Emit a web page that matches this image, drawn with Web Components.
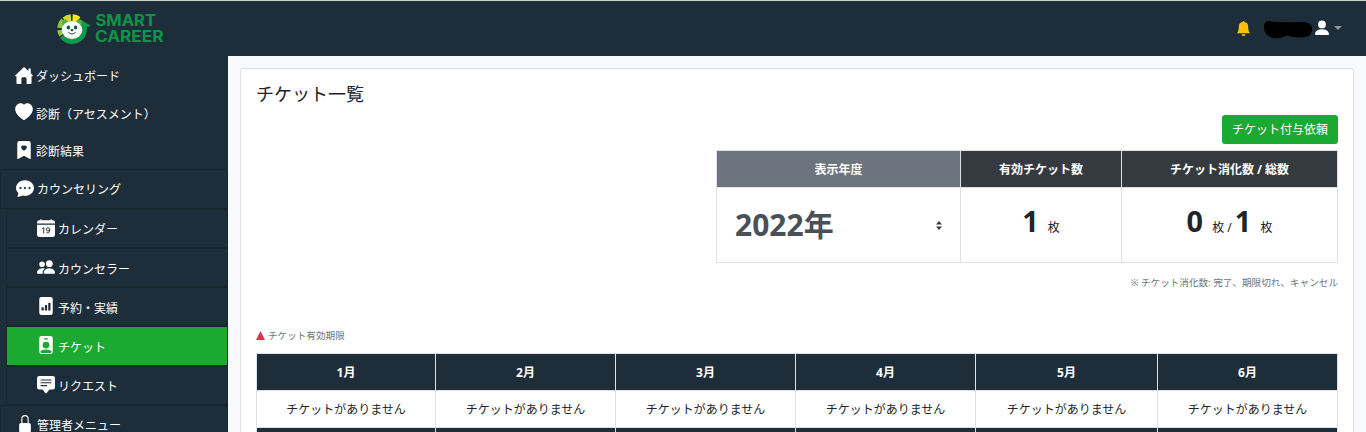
<!DOCTYPE html>
<html lang="ja">
<head>
<meta charset="utf-8">
<title>チケット一覧</title>
<style>
    body {
        margin: 0;
        height: 432px;
        overflow: hidden;
        background: #f8f9fc;
        color: #212529;
        font-family: "Noto Sans", "Noto Sans CJK JP", sans-serif;
        font-size: 12px;
        line-height: 18px;
    }
    .layout {
        display: flex;
        height: 376px;
        overflow: hidden;
    }
    .content {
        flex: 1;
        padding: 12px 12px 0;
    }
    .actions {
        display: flex;
        justify-content: flex-end;
        margin-bottom: 6px;
    }
</style>
</head>
<body>
<app-header></app-header>
<div class="layout">
    <side-menu>
        <menu-item icon="house">ダッシュボード</menu-item>
        <menu-item icon="heart">診断（アセスメント）</menu-item>
        <menu-item icon="bookmark">診断結果</menu-item>
        <menu-item icon="chat" class="group">カウンセリング</menu-item>
        <menu-item icon="calendar" class="sub">カレンダー</menu-item>
        <menu-item icon="people" class="sub">カウンセラー</menu-item>
        <menu-item icon="chart" class="sub">予約・実績</menu-item>
        <menu-item icon="badge" class="sub active">チケット</menu-item>
        <menu-item icon="request" class="sub">リクエスト</menu-item>
        <menu-item icon="lock" class="group">管理者メニュー</menu-item>
    </side-menu>
    <div class="content">
        <page-card heading="チケット一覧">
            <div class="actions"><action-button>チケット付与依頼</action-button></div>
            <ticket-summary year="2022年" valid="1" used="0" total="1"></ticket-summary>
            <ticket-months></ticket-months>
        </page-card>
    </div>
</div>
<script>
const icons = {
    house: '<path d="M8 .8 .4 8.2c-.5.5-.2 1 .3 1h.6V15c0 .7.4 1 1 1h3.400v-4.500c0-1 .6-1.600 1.400-1.600h1.800c.8 0 1.400.6 1.400 1.600V16h3.400c.6 0 1-.3 1-1V9.200h.6c.5 0 .8-.5.3-1L14 6.500V2.300h-2v2.200z"/>',
    heart: '<path d="M8 15.300C-7 6.400 3.300-3.300 7.800 1.300L8 1.500l.2-.2C12.700-3.300 23 6.400 8 15.300z"/>',
    bookmark: '<path fill-rule="evenodd" d="M2 15.500V2a2 2 0 0 1 2-2h8a2 2 0 0 1 2 2v13.500a.5.5 0 0 1-.74.440L8 13.070l-5.260 2.870A.5.5 0 0 1 2 15.500zM8 4.410c1.390-1.420 4.850 1.070 0 4.280-4.850-3.210-1.390-5.700 0-4.280z"/>',
    chat: '<path fill-rule="evenodd" d="M16 8c0 3.900-3.600 7-8 7-.8 0-1.600-.1-2.300-.3-.6.3-1.800.8-4 1.200-.3 0-.5-.2-.4-.5.4-.8.7-1.900.8-2.900C.8 11.300 0 9.700 0 8c0-3.900 3.600-7 8-7s8 3.100 8 7zM5 8a1 1 0 1 0-2 0 1 1 0 0 0 2 0zm4 0a1 1 0 1 0-2 0 1 1 0 0 0 2 0zm3 1a1 1 0 1 0 0-2 1 1 0 0 0 0 2z"/>',
    calendar: '<path d="M4 .5a.5.5 0 0 0-1 0V1H2a2 2 0 0 0-2 2v1h16V3a2 2 0 0 0-2-2h-1V.5a.5.500 0 0 0-1 0V1H4zM0 5h16v9a2 2 0 0 1-2 2H2a2 2 0 0 1-2-2z"/><path fill="none" stroke="#1d2d39" stroke-width=".8" d="m4.600 8.500 1.400-.8v5.100M11.200 9.200a1.450 1.450 0 1 0-2.900 0 1.450 1.450 0 0 0 2.900 0c0 2.300-.4 3.200-1.500 3.200-.7 0-1.100-.3-1.300-.8"/>',
    people: '<path d="M7 14s-1 0-1-1 1-4 5-4 5 3 5 4-1 1-1 1zm4-6a3 3 0 1 0 0-6 3 3 0 0 0 0 6zM5.200 14A2.200 2.200 0 0 1 5 13c0-1.400.7-2.700 1.900-3.700A6 6 0 0 0 5 9c-4 0-5 3-5 4s1 1 1 1zM4.500 8a2.500 2.500 0 1 0 0-5 2.500 2.500 0 0 0 0 5z"/>',
    chart: '<path fill-rule="evenodd" d="M4 0h8a2 2 0 0 1 2 2v12a2 2 0 0 1-2 2H4a2 2 0 0 1-2-2V2a2 2 0 0 1 2-2zm6.500 5a.5.5 0 0 0-.5.5v6a.5.5 0 0 0 .5.500h1a.5.5 0 0 0 .5-.5v-6a.5.5 0 0 0-.5-.5zM7.500 7a.5.500 0 0 0-.5.500v4a.5.5 0 0 0 .5.500h1a.5.5 0 0 0 .5-.5v-4a.5.5 0 0 0-.5-.5zM4.500 9a.5.5 0 0 0-.5.500v2a.5.500 0 0 0 .5.500h1a.5.500 0 0 0 .5-.5v-2a.5.5 0 0 0-.5-.5z"/>',
    badge: '<path fill-rule="evenodd" d="M4 0h8a2 2 0 0 1 2 2v12a2 2 0 0 1-2 2H4a2 2 0 0 1-2-2V2a2 2 0 0 1 2-2zm2.500 2a.5.5 0 0 0 0 1h3a.5.5 0 0 0 0-1zM8 5a3 3 0 1 0 0 6 3 3 0 0 0 0-6zm5 8.800c-.7-1-2.400-1.800-5-1.800s-4.300.8-5 1.800V14a1 1 0 0 0 1 1h8a1 1 0 0 0 1-1z"/>',
    request: '<path fill-rule="evenodd" d="M0 2a2 2 0 0 1 2-2h12a2 2 0 0 1 2 2v8a2 2 0 0 1-2 2h-2.500a1 1 0 0 0-.8.400l-1.900 2.500a1 1 0 0 1-1.600 0l-1.900-2.500a1 1 0 0 0-.8-.4H2a2 2 0 0 1-2-2zm3.500 1a.5.5 0 0 0 0 1h9a.5.5 0 0 0 0-1zm0 2.500a.5.5 0 0 0 0 1h9a.5.5 0 0 0 0-1zm0 2.500a.5.5 0 0 0 0 1h5a.5.5 0 0 0 0-1z"/>',
    lock: '<path d="M5.200 7V3.500a2.800 3 0 0 1 5.600 0V7" fill="none" stroke="currentColor" stroke-width="1"/><path d="M4.500 7h7A1.700 1.700 0 0 1 13.200 8.700V14a2 2 0 0 1-2 2H4.800a2 2 0 0 1-2-2V8.700A1.700 1.700 0 0 1 4.500 7z"/>',
    bell: '<path d="M8 16a2 2 0 0 0 2-2H6a2 2 0 0 0 2 2zM9 1.100a1 1 0 1 0-2 0A5 5 0 0 0 3 6c0 1.100-.2 5.200-2 7h14c-1.800-1.800-2-5.900-2-7a5 5 0 0 0-4-4.900z"/>',
    person: '<path d="M2 15s-1 0-1-1 1-4.800 7-4.800 7 3.800 7 4.800-1 1-1 1zM8 8.300A3.900 3.900 0 1 0 8 .5a3.900 3.900 0 0 0 0 7.800z"/>'
}

const svg = (name, size) => `<svg width="${size}" height="${size}" viewBox="0 0 16 16" fill="currentColor">${icons[name]}</svg>`

class AppHeader extends HTMLElement {
    connectedCallback() {
        this.attachShadow({ mode: "open" }).innerHTML = `<style>
        :host {
            display: flex;
            box-sizing: border-box;
            height: 56px;
            padding: 0 24px 0 56px;
            justify-content: space-between;
            background: #1d2d39;
            border-top: 1px solid #ccd4d1;
            color: #fff;
        }
        svg { display: block; }
        .logo { margin-top: 10px; }
        .user { display: flex; align-items: center; height: 54px; }
        .bell { color: #ffc107; margin-right: 12px; }
        .blot { margin-top: 3px; }
        .person { margin-left: 1px; }
        .caret {
            margin-left: 4px;
            border: 4px solid transparent;
            border-top-color: #8e969c;
            border-bottom: 0;
        }
        </style>
        <svg class="logo" width="110" height="36" viewBox="0 0 110 36">
            <g fill="none" stroke-width="7">
                <path stroke="#8cc63f" d="M4.800 17a11.250 11.250 0 0 1 3.200-7M4.800 19a11.250 11.250 0 0 0 1.500 4.600"/>
                <path stroke="#d3dc25" d="M8.800 9.400A11.250 11.250 0 0 1 15 6.800"/>
                <path stroke="#fce91c" d="M16.600 6.800a11.250 11.250 0 0 1 5.800 2"/>
                <path stroke="#0c9b49" d="M6.800 24.500a11.250 11.250 0 0 0 20.100-9.500"/>
            </g>
            <path fill="#0c9b49" d="m24.500 8.500 10.300 6.300-2.300 1H22z"/>
            <circle cx="9" cy="11.500" r="3" fill="#56ad45"/><circle cx="23" cy="11.500" r="3" fill="#56ad45"/>
            <ellipse cx="16" cy="19" rx="10.300" ry="8.900" fill="#fff"/>
            <g fill="#135b38"><ellipse cx="12.400" cy="16.500" rx="1.700" ry="1.900"/><ellipse cx="19.600" cy="16.500" rx="1.700" ry="1.900"/><ellipse cx="16" cy="19.200" rx="1.500" ry="1.100"/></g>
            <path fill="none" stroke="#135b38" d="M12.500 21.200c1.500 2.300 5.500 2.300 7 0"/>
            <g fill="#0c9547" font-family="Inter, sans-serif" font-weight="700" font-size="15.800">
                <text x="39.500" y="15.300" textLength="60.500" lengthAdjust="spacingAndGlyphs">SMART</text>
                <text x="39" y="30.600" textLength="68.500" lengthAdjust="spacingAndGlyphs">CAREER</text>
            </g>
        </svg>
        <div class="user">
            <span class="bell">${svg("bell", 15)}</span>
            <svg class="blot" width="50" height="20" viewBox="0 0 50 20"><path d="M7 1.200C2.500 0 .7 4 1.200 9c.3 5 4 7 7.500 8.500 3 1.300 8 .7 11-.5l5-1.500c6 2 14 2.500 20 1 5-2.300 5.500-9 2.500-12.500C44 1.300 36 2 30 2.200c-8 0-16 .2-23-1z"/></svg>
            <span class="person">${svg("person", 16)}</span>
            <span class="caret"></span>
        </div>`
    }
}

class SideMenu extends HTMLElement {
    connectedCallback() {
        this.attachShadow({ mode: "open" }).innerHTML = `<style>
        :host {
            display: block;
            box-sizing: border-box;
            width: 228px;
            overflow: hidden;
            background: #1d2d39;
            color: #fff;
        }
        </style>
        <slot></slot>`
    }
}

class MenuItem extends HTMLElement {
    connectedCallback() {
        this.attachShadow({ mode: "open" }).innerHTML = `<style>
        :host {
            display: flex;
            box-sizing: border-box;
            height: 37.600px;
            padding: 2px 0 0 15px;
            align-items: center;
            gap: 3px;
        }
        :host(.group) {
            height: 40px;
            padding: 0 0 0 15px;
            border: 1px solid #182630;
        }
        :host(.sub) {
            height: 39.200px;
            margin-left: 6px;
            padding: 1px 0 0 30px;
            border: 1px solid #182630;
        }
        :host(.active) { background: #1ba932; background-clip: padding-box; }
        svg { display: block; margin-bottom: 2px; }
        slot { display: block; margin-top: 3px; }
        :host(.group) slot { margin-top: 2px; }
        </style>
        ${svg(this.getAttribute("icon"), 18)}
        <slot></slot>`
    }
}

class PageCard extends HTMLElement {
    connectedCallback() {
        this.attachShadow({ mode: "open" }).innerHTML = `<style>
        :host {
            display: block;
            box-sizing: border-box;
            padding: 12px 15px;
            background: #fff;
            border: 1px solid #dfdfdf;
            border-radius: 3px;
        }
        h1 {
            margin: 0 0 7px;
            font-size: 18px;
            font-weight: 400;
            line-height: 27px;
        }
        </style>
        <h1>${this.getAttribute("heading")}</h1>
        <slot></slot>`
    }
}

class ActionButton extends HTMLElement {
    connectedCallback() {
        this.attachShadow({ mode: "open" }).innerHTML = `<style>
        :host { display: block; }
        button {
            display: block;
            height: 29px;
            padding: 1px 10px 0;
            border: 0;
            border-radius: 3px;
            background: #1ba932;
            color: #fff;
            font: inherit;
        }
        </style>
        <button><slot></slot></button>`
    }
}

class TicketSummary extends HTMLElement {
    connectedCallback() {
        const attr = name => this.getAttribute(name)
        this.attachShadow({ mode: "open" }).innerHTML = `<style>
        :host { display: block; }
        table {
            width: 622px;
            margin-left: auto;
            border-collapse: collapse;
            table-layout: fixed;
        }
        th, td { padding: 0; border: 1px solid #dee2e6; text-align: center; }
        th { height: 34px; padding-top: 2px; background: #343a40; color: #fff; }
        th:first-child { background: #6c757d; }
        td { height: 74px; }
        b { font-size: 28.800px; line-height: 34px; }
        .count { padding-bottom: 9px; height: 65px; }
        .count b { margin-right: 6px; }
        .select {
            display: flex;
            align-items: center;
            justify-content: space-between;
            padding: 0 18px;
            color: #495057;
        }
        .select b { font-size: 30px; }
        p { margin: 11px 0 0; color: #6c757d; font-size: 9.600px; text-align: right; }
        </style>
        <table>
            <colgroup><col width="244"><col width="161"><col width="216"></colgroup>
            <tr><th>表示年度</th><th>有効チケット数</th><th>チケット消化数 / 総数</th></tr>
            <tr>
                <td><div class="select"><b>${attr("year")}</b><svg width="6" height="9" viewBox="0 0 6 9" fill="#343a40"><path d="M3 0 0 3.500h6zM3 9 0 5.500h6z"/></svg></div></td>
                <td class="count"><b>${attr("valid")}</b> 枚</td>
                <td class="count"><b>${attr("used")}</b> 枚 / <b>${attr("total")}</b> 枚</td>
            </tr>
        </table>
        <p>※ チケット消化数: 完了、期限切れ、キャンセル</p>`
    }
}

class TicketMonths extends HTMLElement {
    connectedCallback() {
        const months = [1, 2, 3, 4, 5, 6]
        const widths = [179, 180, 180, 180, 182, 180]
        this.attachShadow({ mode: "open" }).innerHTML = `<style>
        :host { display: block; margin-top: 34px; }
        .note {
            display: flex;
            align-items: center;
            gap: 3px;
            margin-bottom: 8px;
            color: #6c757d;
            font-size: 9.600px;
        }
        .note span { margin-top: 1px; }
        table { width: 1082px; border-collapse: collapse; table-layout: fixed; }
        th, td { height: 34px; padding: 2px 0 0; border: 1px solid #dee2e6; text-align: center; }
        th { background: #1d2d39; color: #fff; }
        </style>
        <div class="note"><svg width="9" height="9" viewBox="0 0 9 9"><path fill="#dc3545" d="M4.500 0 9 9H0z"/></svg><span>チケット有効期限</span></div>
        <table>
            <colgroup>${widths.map(w => `<col width="${w}">`).join("")}</colgroup>
            <tr>${months.map(m => `<th>${m}月</th>`).join("")}</tr>
            <tr>${months.map(() => "<td>チケットがありません</td>").join("")}</tr>
            <tr>${months.map(() => "<th></th>").join("")}</tr>
        </table>`
    }
}

customElements.define("app-header", AppHeader)
customElements.define("side-menu", SideMenu)
customElements.define("menu-item", MenuItem)
customElements.define("page-card", PageCard)
customElements.define("action-button", ActionButton)
customElements.define("ticket-summary", TicketSummary)
customElements.define("ticket-months", TicketMonths)
</script>
</body>
</html>
